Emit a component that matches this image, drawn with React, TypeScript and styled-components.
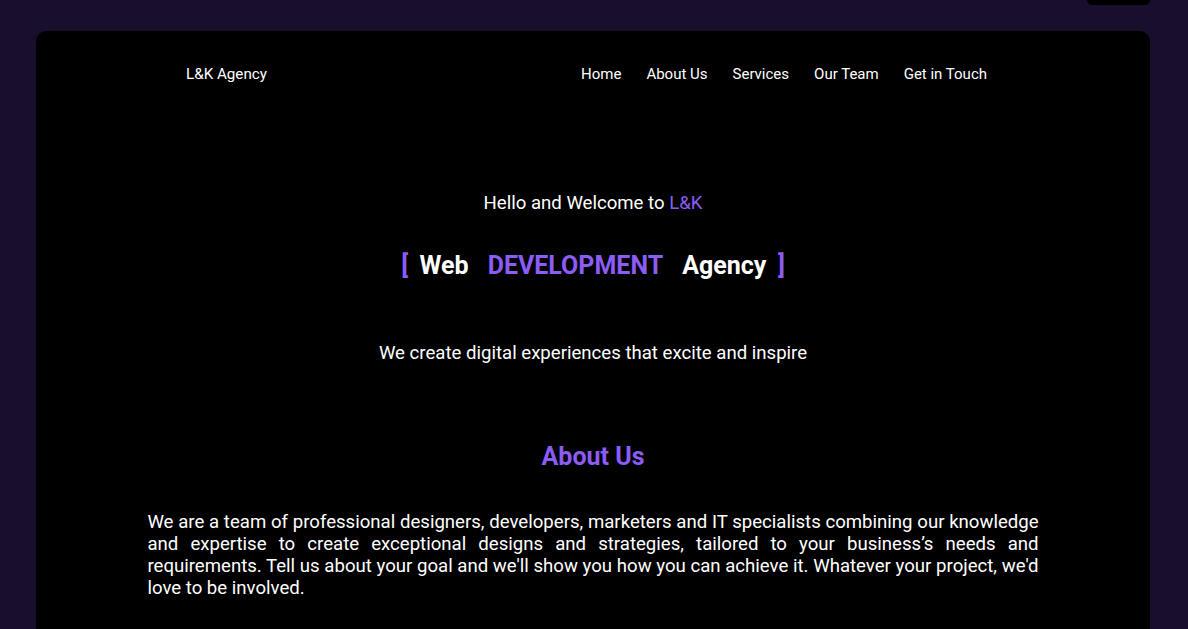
import React from 'react';
import styled, { createGlobalStyle } from 'styled-components';

const GlobalStyle = createGlobalStyle`
  html, body {
    margin: 0;
    padding: 0;
    background: #190f2d;
    font-family: Roboto, "Liberation Sans", sans-serif;
    overflow: hidden;
  }
`

const Page = styled.div`
  padding: 31px 38px 0 36px;
  min-height: 629px;
  box-sizing: border-box;
  position: relative;
`

const TopTab = styled.div`
  position: absolute;
  top: -20px;
  right: 38px;
  width: 63px;
  height: 25px;
  background: #000;
  border-radius: 5px;
`

const Card = styled.main`
  background: #000;
  border-radius: 10px;
  min-height: 640px;
  color: #fff;
`

const Header = styled.header`
  display: flex;
  justify-content: space-between;
  align-items: center;
  padding: 33px 163px 0 150px;
  height: 20px;
`

const Logo = styled.div`
  font-size: 15.2px;
  color: #fff;
`

const Nav = styled.nav`
  display: flex;
  gap: 25px;
`

const NavLink = styled.a`
  font-size: 15px;
  color: #fff;
  text-decoration: none;
`

const Hero = styled.section`
  display: flex;
  flex-direction: column;
  align-items: center;
  padding-top: 108px;
`

const Greeting = styled.p`
  margin: 0;
  font-size: 18.6px;
  line-height: 22px;
`

const Accent = styled.span`
  color: #8b5cf6;
`

const Title = styled.h1`
  margin: 38px 0 0;
  font-size: 25px;
  line-height: 28px;
  font-weight: 700;
  display: flex;
  align-items: center;
`

const Bracket = styled.span`
  color: #8b5cf6;
  margin: 0 2px;
`

const Word = styled.span<{ $accent?: boolean }>`
  color: ${p => (p.$accent ? '#8b5cf6' : '#fff')};
  margin: 0 9.5px;
`

const Tagline = styled.p`
  margin: 62px 0 0;
  font-size: 18.6px;
  line-height: 22px;
`

const About = styled.section`
  display: flex;
  flex-direction: column;
  align-items: center;
  padding-top: 79px;
`

const SectionTitle = styled.h2`
  margin: 0;
  font-size: 25px;
  line-height: 28px;
  font-weight: 700;
  color: #8b5cf6;
`

const Paragraph = styled.p`
  width: 80%;
  margin: 40px 0 0;
  font-size: 18.6px;
  line-height: 22px;
  text-align: justify;
`

const navItems = ['Home', 'About Us', 'Services', 'Our Team', 'Get in Touch'];

const App = () => {
  return (
    <Page>
      <GlobalStyle />
      <TopTab />
      <Card>
        <Header>
          <Logo>L&amp;K Agency</Logo>
          <Nav>
            {navItems.map(item => (
              <NavLink key={item} href="#">{item}</NavLink>
            ))}
          </Nav>
        </Header>
        <Hero>
          <Greeting>Hello and Welcome to <Accent>L&amp;K</Accent></Greeting>
          <Title>
            <Bracket>[</Bracket>
            <Word>Web</Word>
            <Word $accent>DEVELOPMENT</Word>
            <Word>Agency</Word>
            <Bracket>]</Bracket>
          </Title>
          <Tagline>We create digital experiences that excite and inspire</Tagline>
        </Hero>
        <About>
          <SectionTitle>About Us</SectionTitle>
          <Paragraph>
            We are a team of professional designers, developers, marketers and IT specialists combining our knowledge and expertise to create exceptional designs and strategies, tailored to your business’s needs and requirements. Tell us about your goal and we'll show you how you can achieve it. Whatever your project, we'd love to be involved.
          </Paragraph>
        </About>
      </Card>
    </Page>
  );
};

export default App;
